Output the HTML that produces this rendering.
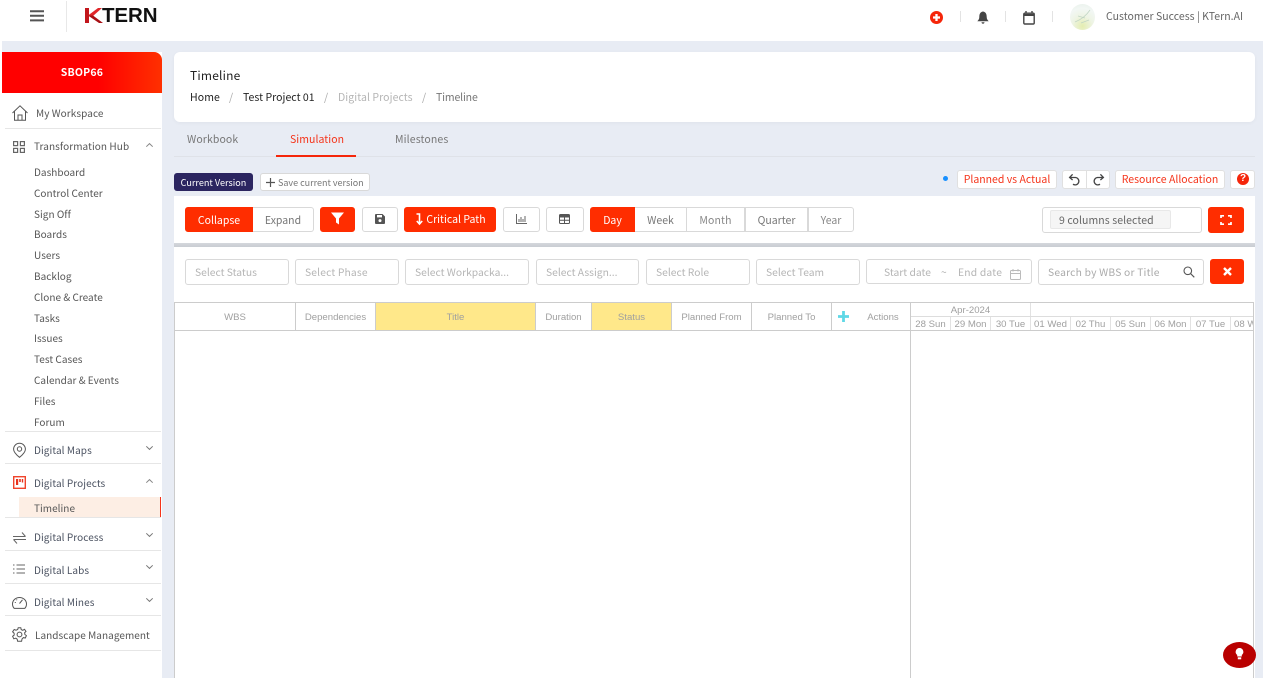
<!DOCTYPE html>
<html><head><meta charset="utf-8">
<style>
*{box-sizing:border-box}
html,body{margin:0;padding:0}
body{width:1263px;height:678px;overflow:hidden;background:#e8ecf4;position:relative;font-family:"Noto Sans CJK JP","Liberation Sans",sans-serif;font-size:11px;color:#555}
.a{position:absolute}
.t{position:absolute;white-space:nowrap;line-height:16px}
.btn{position:absolute;display:flex;align-items:center;justify-content:center;border:1px solid #d9d9d9;background:#fff;border-radius:3px;font-size:10.5px;color:#666;white-space:nowrap}
.lo{padding-top:2px}
.red{background:#ff2d00;border-color:#ff2d00;color:#fff}
.inp{position:absolute;top:259px;height:26px;border:1px solid #d9d9d9;border-radius:3px;background:#fff;color:#b5b5b5;font-size:10.3px;line-height:24px;padding-left:9px;white-space:nowrap}
.m{position:absolute;left:34px;font-size:10px;color:#555;line-height:14px;white-space:nowrap;letter-spacing:.03px}
.h{position:absolute;left:34px;font-size:10px;color:#4a5160;line-height:14px;white-space:nowrap;letter-spacing:.08px}
.ln{position:absolute;left:5px;width:156px;height:1px;background:#e6e6e6}
.th{position:absolute;top:303px;height:27px;line-height:29px;text-align:center;font-family:"Liberation Sans",sans-serif;font-size:9.6px;color:#a0a0a0;border-right:1px solid #ccc}
.d{position:absolute;top:317px;height:13px;width:40px;line-height:15px;text-align:center;font-family:"Liberation Sans",sans-serif;font-size:9.6px;color:#a0a0a0;border-right:1px solid #e2e2e2;white-space:nowrap;overflow:hidden}
svg{position:absolute;overflow:visible}
</style></head><body>

<!-- top bar -->
<div class="a" style="left:2px;top:0;width:1261px;height:41px;background:#fff"></div>
<div class="a" style="left:0;top:0;width:2px;height:678px;background:#fff"></div>
<svg style="left:30px;top:10px" width="14" height="12"><path d="M0 1.2H14M0 5.8H14M0 10.4H14" stroke="#555" stroke-width="2"/></svg>
<div class="a" style="left:66px;top:1px;width:1px;height:31px;background:#e8e8e8"></div>
<svg style="left:85px;top:8px" width="18" height="16"><path d="M0 0H4V15H0Z" fill="#c2161c"/><path d="M13 0L3 7.5L8 8L17 0Z" fill="#e0262a"/><path d="M3 7.5L14 15H18L8 7.5Z" fill="#a81015"/></svg>
<div class="t" style="left:102px;top:6px;font:bold 20.5px/20px 'Liberation Sans',sans-serif;color:#111;letter-spacing:-.1px">TERN</div>
<svg style="left:930px;top:11px" width="13" height="13"><circle cx="6.5" cy="6.5" r="6.5" fill="#f5260a"/><path d="M6.5 3V10M3 6.5H10" stroke="#fff" stroke-width="2.3"/></svg>
<div class="a" style="left:960px;top:11px;width:1px;height:11px;background:#e3e3e3"></div>
<svg style="left:977px;top:11px" width="12" height="14"><path d="M6 0.5C3 1 2.3 3.5 2.3 6C2.3 8 1.5 9 .3 10.2H11.7C10.5 9 9.7 8 9.7 6C9.7 3.5 9 1 6 .5Z" fill="#444"/><path d="M4.5 11.2H7.5C7.5 13.2 4.5 13.2 4.5 11.2Z" fill="#444"/></svg>
<div class="a" style="left:1005px;top:11px;width:1px;height:11px;background:#e3e3e3"></div>
<svg style="left:1023px;top:11px" width="12" height="14"><rect x=".8" y="2.2" width="10.4" height="10.8" rx="1" fill="none" stroke="#444" stroke-width="1.4"/><path d="M.8 3H11.2V5H.8Z" fill="#444"/><path d="M3 0V2.5M9 0V2.5" stroke="#444" stroke-width="1.4"/></svg>
<div class="a" style="left:1052px;top:11px;width:1px;height:11px;background:#e3e3e3"></div>
<div class="a" style="left:1070px;top:4px;width:25px;height:26px;border-radius:50%;background:radial-gradient(circle at 50% 85%,#e4edb0 0,#eef4e4 40%,#f2f7f4 70%,#e6efe8 100%)"></div>
<svg style="left:1074px;top:9px" width="18" height="16"><path d="M1 13C6 11 12 7 16 1M4 7L11 9M7 14L15 11" stroke="#c2d6c4" stroke-width=".8" fill="none"/></svg>
<div class="t" style="left:1106px;top:9px;font-size:10.5px;color:#666;letter-spacing:.02px">Customer Success | KTern.AI</div>

<!-- sidebar -->
<div class="a" style="left:2px;top:52px;width:160px;height:626px;background:#fff"></div>
<div class="a" style="left:2px;top:52px;width:160px;height:41px;background:linear-gradient(90deg,#ff0000 0,#ff0000 60%,#ff3000 100%);border-radius:0 8px 0 0;color:#fff;font-weight:bold;font-size:10.5px;text-align:center;line-height:42px;letter-spacing:.2px">SBOP66</div>
<svg style="left:12px;top:105px" width="16" height="16" fill="none" stroke="#555" stroke-width="1"><path d="M.5 8L8 .8L15.5 8M2.5 6.5V15.2H13.5V6.5M6 15V10H10V15"/></svg>
<div class="h" style="left:36px;top:106px;color:#555">My Workspace</div>
<div class="ln" style="top:128px"></div>

<svg style="left:13px;top:141px" width="12" height="12" fill="none" stroke="#666" stroke-width="1.2"><rect x=".6" y=".6" width="4" height="4"/><rect x="7.4" y=".6" width="4" height="4"/><rect x=".6" y="7.4" width="4" height="4"/><rect x="7.4" y="7.4" width="4" height="4"/></svg>
<div class="h" style="top:139px;color:#555">Transformation Hub</div>
<svg style="left:146px;top:143px" width="7" height="4" fill="none" stroke="#888"><path d="M.3 3.7L3.5 .6L6.7 3.7"/></svg>
<div class="m" style="top:165px">Dashboard</div>
<div class="m" style="top:186px">Control Center</div>
<div class="m" style="top:207px">Sign Off</div>
<div class="m" style="top:227px">Boards</div>
<div class="m" style="top:248px">Users</div>
<div class="m" style="top:269px">Backlog</div>
<div class="m" style="top:290px">Clone &amp; Create</div>
<div class="m" style="top:311px">Tasks</div>
<div class="m" style="top:331px">Issues</div>
<div class="m" style="top:352px">Test Cases</div>
<div class="m" style="top:373px">Calendar &amp; Events</div>
<div class="m" style="top:394px">Files</div>
<div class="m" style="top:415px">Forum</div>
<div class="ln" style="top:431px"></div>

<svg style="left:13px;top:443px" width="13" height="15" fill="none" stroke="#555" stroke-width="1"><path d="M6.5 14.3C3 11.5 .6 9 .6 6.2A5.9 5.9 0 0 1 12.4 6.2C12.4 9 10 11.5 6.5 14.3Z"/><circle cx="6.5" cy="6" r="2.2"/></svg>
<div class="h" style="top:443px">Digital Maps</div>
<svg style="left:146px;top:446px" width="7" height="4" fill="none" stroke="#777"><path d="M.3 .3L3.5 3.4L6.7 .3"/></svg>
<div class="ln" style="top:463px"></div>

<svg style="left:13px;top:476px" width="13" height="13"><rect x=".7" y=".7" width="11.6" height="11.6" fill="#fff" stroke="#f0442c" stroke-width="1.4"/><path d="M3 3H5.2V9H3ZM6.2 3H7.8V6H6.2ZM8.8 3H10.2V6.5H8.8Z" fill="#e8321c"/></svg>
<div class="h" style="top:476px">Digital Projects</div>
<svg style="left:146px;top:479px" width="7" height="4" fill="none" stroke="#888"><path d="M.3 3.7L3.5 .6L6.7 3.7"/></svg>
<div class="a" style="left:19px;top:497px;width:142px;height:20px;background:#fdeee4;border-right:1px solid #f5341a"></div>
<div class="m" style="top:501px">Timeline</div>
<div class="ln" style="top:517px"></div>

<svg style="left:13px;top:531px" width="13" height="13" fill="none" stroke="#666" stroke-width="1"><path d="M0 5.5H12.5M12.5 5.5L9 1.5M.5 8.5H13M.5 8.5L4 12.5"/></svg>
<div class="h" style="top:530px">Digital Process</div>
<svg style="left:146px;top:533px" width="7" height="4" fill="none" stroke="#777"><path d="M.3 .3L3.5 3.4L6.7 .3"/></svg>
<div class="ln" style="top:550px"></div>

<svg style="left:13px;top:564px" width="12" height="10" fill="none" stroke="#666" stroke-width="1"><path d="M0 1H1.5M3.5 1H12M0 5H1.5M3.5 5H12M0 9H1.5M3.5 9H12"/></svg>
<div class="h" style="top:563px">Digital Labs</div>
<svg style="left:146px;top:565px" width="7" height="4" fill="none" stroke="#777"><path d="M.3 .3L3.5 3.4L6.7 .3"/></svg>
<div class="ln" style="top:583px"></div>

<svg style="left:12px;top:596px" width="15" height="13" fill="none" stroke="#555" stroke-width="1"><path d="M2.2 12.4A7 6.6 0 1 1 12.8 12.4Z"/><path d="M7.5 7.5L10.5 3.8M2.8 6.5H3.8M4.5 3.5L5 4.2"/></svg>
<div class="h" style="top:595px">Digital Mines</div>
<svg style="left:146px;top:598px" width="7" height="4" fill="none" stroke="#777"><path d="M.3 .3L3.5 3.4L6.7 .3"/></svg>
<div class="ln" style="top:615px"></div>

<svg style="left:12px;top:627px" width="15" height="15" viewBox="0 0 15 15" fill="none" stroke="#555" stroke-width="1"><path d="M6.2.7H8.8L9.2 2.6L10.8 3.3L12.5 2.3L14 4.4L12.6 5.8L12.9 7.5L14.4 8.6L13.3 11L11.4 10.6L10 12L9.6 14.2H5.6L5.2 12.2L3.8 11.2L1.8 11.8L.6 9.3L2.2 8L2.1 6.2L.6 4.8L2.2 2.5L4 3.2L5.7 2.5Z"/><circle cx="7.5" cy="7.5" r="2.4"/></svg>
<div class="h" style="left:35px;top:628px;color:#555;letter-spacing:.05px">Landscape Management</div>
<div class="ln" style="top:650px"></div>

<!-- header card -->
<div class="a" style="left:174px;top:52px;width:1081px;height:70px;background:#fff;border-radius:6px;box-shadow:0 1px 4px rgba(0,0,0,.04)"></div>
<div class="t" style="left:190px;top:68px;font-size:12px;color:#222;letter-spacing:.2px">Timeline</div>
<div class="t" style="left:190px;top:90px;font-size:10.5px;color:#222;letter-spacing:.1px">Home</div>
<div class="t" style="left:229px;top:90px;font-size:10.5px;color:#aaa">/</div>
<div class="t" style="left:243px;top:90px;font-size:10.5px;color:#222;letter-spacing:.03px">Test Project 01</div>
<div class="t" style="left:324px;top:90px;font-size:10.5px;color:#aaa">/</div>
<div class="t" style="left:338px;top:90px;font-size:10.5px;color:#b5b5b5;letter-spacing:.07px">Digital Projects</div>
<div class="t" style="left:422px;top:90px;font-size:10.5px;color:#aaa">/</div>
<div class="t" style="left:436px;top:90px;font-size:10.5px;color:#777;letter-spacing:-.15px">Timeline</div>

<!-- tabs -->
<div class="t" style="left:187px;top:132px;font-size:10.5px;color:#777;letter-spacing:.1px">Workbook</div>
<div class="t" style="left:290px;top:132px;font-size:10.5px;color:#f5341a;letter-spacing:.05px">Simulation</div>
<div class="t" style="left:395px;top:132px;font-size:10.5px;color:#777;letter-spacing:.12px">Milestones</div>
<div class="a" style="left:174px;top:156px;width:1081px;height:1px;background:#dfe2e8"></div>
<div class="a" style="left:276px;top:155px;width:80px;height:2px;background:#f5260a"></div>

<!-- version row -->
<div class="a" style="left:174px;top:173px;width:79px;height:18px;background:#2b2560;border-radius:3px;color:#fff;font-size:9.1px;line-height:19px;text-align:center">Current Version</div>
<div class="a" style="left:260px;top:173px;width:110px;height:18px;background:#fff;border:1px solid #d9d9d9;border-radius:3px"></div>
<svg style="left:266px;top:178px" width="9" height="9"><path d="M4.5 0V9M0 4.5H9" stroke="#555" stroke-width="1.2"/></svg>
<div class="t" style="left:278px;top:175px;font-size:9px;line-height:16px;color:#777">Save current version</div>
<div class="a" style="left:943px;top:176px;width:5px;height:5px;border-radius:50%;background:#1890ff"></div>
<div class="btn" style="left:957px;top:170px;width:100px;height:19px;color:#f5341a;font-size:10.5px;border-color:#e0e0e0">Planned vs Actual</div>
<div class="btn" style="left:1062px;top:170px;width:48px;height:19px;border-color:#e0e0e0"></div>
<div class="a" style="left:1086px;top:170px;width:1px;height:19px;background:#e0e0e0"></div>
<svg style="left:1068px;top:173px" width="13" height="13" fill="none" stroke="#444" stroke-width="1.3"><path d="M2 4.5H7.5A3.7 3.7 0 1 1 5 11.2M4.6 1.3L1.6 4.5L4.6 7"/></svg>
<svg style="left:1092px;top:173px" width="13" height="13" fill="none" stroke="#444" stroke-width="1.3"><path d="M11 4.5H5.5A3.7 3.7 0 1 0 8 11.2M8.4 1.3L11.4 4.5L8.4 7"/></svg>
<div class="btn" style="left:1115px;top:170px;width:110px;height:19px;color:#f5341a;font-size:10.5px;border-color:#e0e0e0">Resource Allocation</div>
<div class="btn" style="left:1230px;top:170px;width:25px;height:19px;border-color:#e0e0e0"></div>
<div class="a" style="left:1237px;top:173px;width:12px;height:12px;border-radius:50%;background:#f5260a;color:#fff;font:bold 10px/12px 'Liberation Sans',sans-serif;text-align:center">?</div>

<!-- toolbar panel -->
<div class="a" style="left:174px;top:196px;width:1081px;height:482px;background:#fff"></div>
<div class="a" style="left:174px;top:243px;width:1081px;height:4px;background:linear-gradient(#d4d7dc,#c9ccd2)"></div>

<div class="btn red lo" style="left:185px;top:207px;width:68px;height:25px;border-radius:3px 0 0 3px">Collapse</div>
<div class="btn lo" style="left:253px;top:207px;width:61px;height:25px;border-radius:0 3px 3px 0;border-left:0;color:#777">Expand</div>
<div class="btn red" style="left:320px;top:207px;width:35px;height:25px"></div>
<svg style="left:331px;top:212px" width="13" height="13"><path d="M0 .5H13L8 6.5V12.5L5 10.5V6.5Z" fill="#fff"/></svg>
<div class="btn" style="left:362px;top:207px;width:36px;height:25px"></div>
<svg style="left:375px;top:214px" width="10" height="10"><path d="M0 1A1 1 0 0 1 1 0H7.5L10 2.5V9A1 1 0 0 1 9 10H1A1 1 0 0 1 0 9Z" fill="#555"/><rect x="2" y="1" width="5" height="2.4" fill="#fff"/><circle cx="5" cy="6.6" r="1.5" fill="#fff"/></svg>
<div class="btn red" style="left:404px;top:207px;width:92px;height:25px;padding-left:12px">Critical Path</div>
<svg style="left:416px;top:213px" width="7" height="13" fill="none" stroke="#fff" stroke-width="1.6"><path d="M.5 1H3.5V10.5M.8 8L3.5 11L6.2 8"/></svg>
<div class="btn" style="left:503px;top:207px;width:37px;height:25px"></div>
<svg style="left:516px;top:214px" width="11" height="10" fill="none" stroke="#666"><path d="M.5 0V9.5H11M3 8V5M5 8V3M7 8V5M9 8V2"/></svg>
<div class="btn" style="left:546px;top:207px;width:38px;height:25px"></div>
<svg style="left:559px;top:214px" width="11" height="10"><rect x=".5" y=".5" width="10" height="9" rx="1" fill="none" stroke="#555"/><path d="M.5 1H10.5V3.5H.5Z" fill="#555"/><path d="M.5 6.3H10.5M5.5 3.5V9.5" stroke="#555"/></svg>

<div class="btn red lo" style="left:590px;top:207px;width:45px;height:25px;border-radius:3px 0 0 3px">Day</div>
<div class="btn lo" style="left:635px;top:207px;width:52px;height:25px;border-radius:0;border-left:0;color:#777">Week</div>
<div class="btn lo" style="left:686px;top:207px;width:59px;height:25px;border-radius:0;color:#888;letter-spacing:.1px">Month</div>
<div class="btn lo" style="left:745px;top:207px;width:63px;height:25px;border-radius:0;color:#777">Quarter</div>
<div class="btn lo" style="left:808px;top:207px;width:46px;height:25px;border-radius:0 3px 3px 0;color:#888">Year</div>

<div class="btn" style="left:1042px;top:207px;width:160px;height:26px"></div>
<div class="a" style="left:1050px;top:210px;width:121px;height:19px;background:#f5f5f5;border:1px solid #e8e8e8;border-radius:2px;font-size:10.5px;line-height:20px;padding-left:8px;color:#666;letter-spacing:.08px">9 columns selected</div>
<div class="btn red" style="left:1208px;top:207px;width:36px;height:26px"></div>
<svg style="left:1221px;top:215px" width="10" height="10" fill="none" stroke="#fff" stroke-width="1.7"><path d="M0 3V.8H3M7 .8H10V3M10 7V9.2H7M3 9.2H0V7"/></svg>

<!-- filters -->
<div class="inp" style="left:185px;width:104px">Select Status</div>
<div class="inp" style="left:295px;width:104px;letter-spacing:.15px">Select Phase</div>
<div class="inp" style="left:405px;width:124px">Select Workpacka...</div>
<div class="inp" style="left:536px;width:103px">Select Assign...</div>
<div class="inp" style="left:646px;width:104px">Select Role</div>
<div class="inp" style="left:756px;width:104px">Select Team</div>
<div class="inp" style="left:866px;width:166px;height:25px;padding:0"><span class="t" style="left:17px;top:4px">Start date</span><span class="t" style="left:74px;top:4px">~</span><span class="t" style="left:91px;top:4px;letter-spacing:.2px">End date</span></div>
<svg style="left:1010px;top:269px" width="11" height="11" fill="none" stroke="#bbb"><rect x=".5" y="1.5" width="10" height="9" rx="1"/><path d="M.5 4.5H10.5M3 0V2.5M8 0V2.5"/></svg>
<div class="inp" style="left:1038px;width:166px;color:#aaa;letter-spacing:.2px">Search by WBS or Title</div>
<svg style="left:1183px;top:266px" width="12" height="12" fill="none" stroke="#555" stroke-width="1.1"><circle cx="4.8" cy="4.8" r="3.8"/><path d="M7.7 7.7L11.3 11.3"/></svg>
<div class="btn red" style="left:1210px;top:259px;width:34px;height:25px"></div>
<svg style="left:1223px;top:267px" width="9" height="9"><path d="M1 1L8 8M8 1L1 8" stroke="#fff" stroke-width="2.4"/></svg>

<!-- grid -->
<div class="a" style="left:174px;top:302px;width:1080px;height:376px;border:1px solid #ccc;border-bottom:0;background:#fff"></div>
<div class="a" style="left:175px;top:330px;width:1078px;height:1px;background:#ccc"></div>
<div class="a" style="left:910px;top:303px;width:1px;height:375px;background:#ccc"></div>
<div class="th" style="left:175px;width:121px">WBS</div>
<div class="th" style="left:296px;width:80px">Dependencies</div>
<div class="th" style="left:376px;width:160px;background:#ffe88a">Title</div>
<div class="th" style="left:536px;width:56px">Duration</div>
<div class="th" style="left:592px;width:80px;background:#ffe88a">Status</div>
<div class="th" style="left:672px;width:80px">Planned From</div>
<div class="th" style="left:752px;width:80px">Planned To</div>
<div class="th" style="left:832px;width:79px;padding-left:23px;border-right:0">Actions</div>
<svg style="left:838px;top:311px" width="11" height="11"><path d="M5.5 0V11M0 5.5H11" stroke="#5fd8e6" stroke-width="2.8"/></svg>
<div class="a" style="left:911px;top:316px;width:342px;height:1px;background:#ddd"></div>
<div class="a" style="left:911px;top:303px;width:120px;height:13px;line-height:15px;text-align:center;font-family:'Liberation Sans',sans-serif;font-size:9.6px;color:#a0a0a0;border-right:1px solid #e2e2e2">Apr-2024</div>
<div class="d" style="left:911px">28 Sun</div>
<div class="d" style="left:951px">29 Mon</div>
<div class="d" style="left:991px">30 Tue</div>
<div class="d" style="left:1031px">01 Wed</div>
<div class="d" style="left:1071px">02 Thu</div>
<div class="d" style="left:1111px">05 Sun</div>
<div class="d" style="left:1151px">06 Mon</div>
<div class="d" style="left:1191px">07 Tue</div>
<div class="d" style="left:1231px;width:22px;border:0;text-align:left;padding-left:3px">08 Wed</div>

<!-- help bulb -->
<div class="a" style="left:1223px;top:642px;width:33px;height:26px;border-radius:50%;background:#b90000"></div>
<svg style="left:1235px;top:648px" width="9" height="13"><path d="M4.5 0A3.9 3.9 0 0 1 6.8 7V8.5H2.2V7A3.9 3.9 0 0 1 4.5 0Z" fill="#fff"/><rect x="2.8" y="9.3" width="3.4" height="2" fill="#fff"/></svg>
</body></html>
